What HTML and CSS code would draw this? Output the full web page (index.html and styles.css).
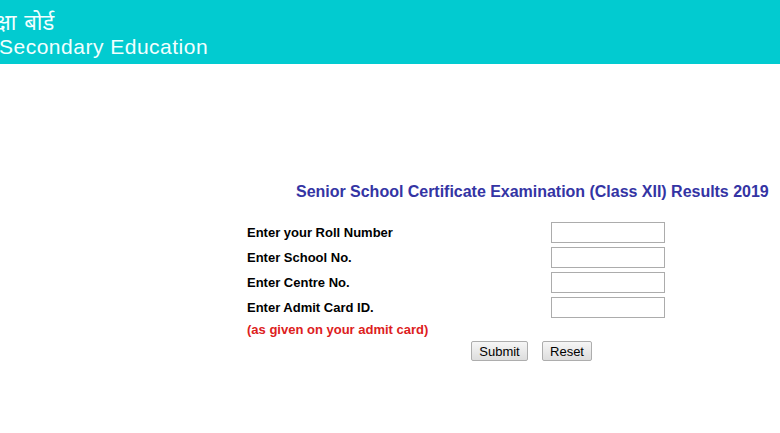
FILE: index.html
```html
<!DOCTYPE html>
<html lang="en">
<head>
<meta charset="utf-8">
<title>Results 2019</title>
<link rel="stylesheet" href="styles.css">
</head>
<body>
<header class="banner">
  <div class="banner-hi">क्षा बोर्ड</div>
  <div class="banner-en">Secondary Education</div>
</header>
<main class="content">
  <h1 class="title">Senior School Certificate Examination (Class XII) Results 2019</h1>
  <form class="form">
    <div class="row"><label class="label">Enter your Roll Number</label><input class="field" type="text"></div>
    <div class="row"><label class="label">Enter School No.</label><input class="field" type="text"></div>
    <div class="row"><label class="label">Enter Centre No.</label><input class="field" type="text"></div>
    <div class="row"><label class="label">Enter Admit Card ID.</label><input class="field" type="text"></div>
    <div class="note">(as given on your admit card)</div>
    <div class="actions">
      <button class="btn btn-submit" type="button">Submit</button>
      <button class="btn btn-reset" type="button">Reset</button>
    </div>
  </form>
</main>
</body>
</html>
```

FILE: styles.css
```css
* { box-sizing: border-box; }
html, body { margin: 0; padding: 0; background: #fff; }
body { font-family: "Liberation Sans", Arial, sans-serif; overflow: hidden; }

.banner {
  height: 64px;
  background: #02cbd0;
  color: #f2ffff;
  overflow: hidden;
  padding-top: 8px;
}
.banner-hi {
  font-family: "Noto Sans", "Liberation Sans", sans-serif;
  font-size: 22px;
  line-height: 27px;
  margin-left: -5px;
  word-spacing: 2px;
}
.banner-en {
  font-size: 21px;
  line-height: 24px;
  letter-spacing: 0.5px;
  margin-left: -1px;
}

.content {
  padding-top: 118px;
  padding-left: 247px;
}
.title {
  margin: 0 0 0 49px;
  font-size: 16px;
  line-height: 20px;
  font-weight: bold;
  color: #3434a4;
  white-space: nowrap;
  letter-spacing: -0.02px;
}
.form {
  margin-top: 18px;
  width: 418px;
}
.row {
  display: flex;
  justify-content: space-between;
  align-items: center;
  height: 25px;
}
.label {
  font-size: 13px;
  font-weight: bold;
  color: #000;
}
.field {
  width: 114px;
  height: 21px;
  border: 1px solid #acacac;
  background: #fff;
  margin: 0;
  padding: 0;
}
.note {
  font-size: 13px;
  font-weight: bold;
  color: #dd2020;
  height: 20px;
  line-height: 20px;
}
.actions {
  display: flex;
  gap: 14px;
  padding-left: 224px;
  margin-top: 1px;
}
.btn {
  font-family: "Liberation Sans", Arial, sans-serif;
  font-size: 13px;
  height: 20px;
  padding: 0;
  border: 1px solid #adadad;
  border-radius: 2px;
  background: linear-gradient(#f6f6f6, #dddddd);
  color: #000;
}
.btn-submit { width: 57px; }
.btn-reset { width: 50px; }
```
